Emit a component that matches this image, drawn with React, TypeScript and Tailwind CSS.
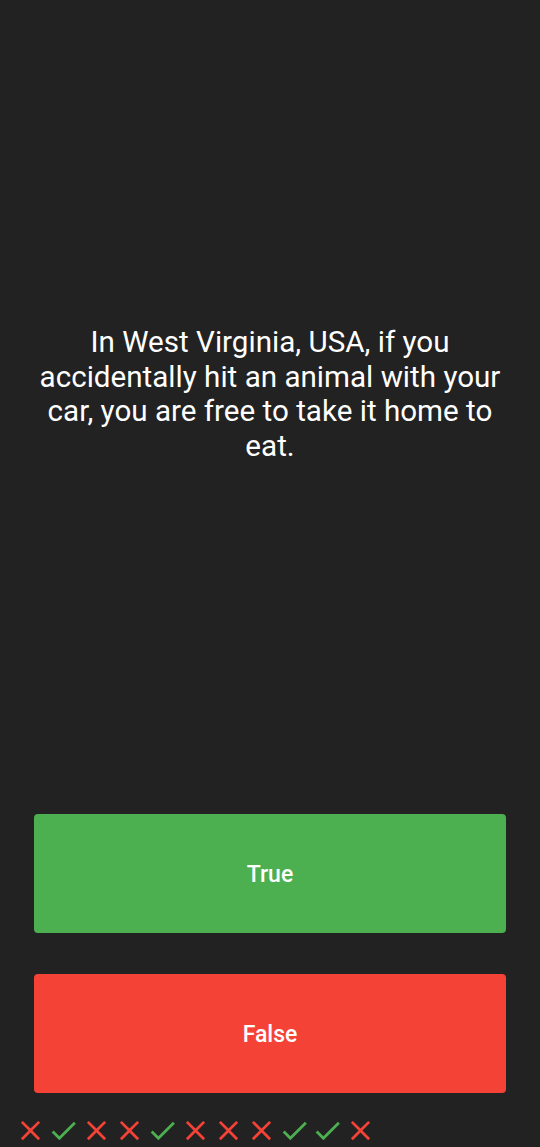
import React from "react";

const XIcon = () => (
  <svg width="33" height="33" viewBox="0 0 24 24" fill="#F44336">
    <path d="M19 6.41 17.59 5 12 10.59 6.41 5 5 6.41 10.59 12 5 17.59 6.41 19 12 13.41 17.59 19 19 17.59 13.41 12z" />
  </svg>
);

const CheckIcon = () => (
  <svg width="33" height="33" viewBox="0 0 24 24" fill="#4CAF50">
    <path d="M9 16.17 4.83 12l-1.42 1.41L9 19 21 7l-1.41-1.41z" />
  </svg>
);

export default function App() {
  const results = [false, true, false, false, true, false, false, false, true, true, false];
  return (
    <div
      className="w-[540px] h-[1147px] bg-[#222222] flex flex-col overflow-hidden"
      style={{ fontFamily: "Roboto, 'Noto Sans', sans-serif" }}
    >
      <div className="pt-[325px] px-[34px]">
        <p className="text-white text-[29.6px] leading-[34.5px] text-center">
          In West Virginia, USA, if you accidentally hit an animal with your car, you are free to take it home to eat.
        </p>
      </div>
      <div className="flex-1" />
      <div className="flex flex-col gap-[41px] px-[34px]">
        <button className="h-[119px] w-full rounded-[4px] bg-[#4CAF50] text-white text-[23px] font-medium pt-[3px]">
          True
        </button>
        <button className="h-[119px] w-full rounded-[4px] bg-[#F44336] text-white text-[23px] font-medium pt-[3px]">
          False
        </button>
      </div>
      <div className="mt-[21px] h-[33px] flex pl-[14px]">
        {results.map((r, i) => (
          <div key={i} className="w-[33px] h-[33px]">
            {r ? <CheckIcon /> : <XIcon />}
          </div>
        ))}
      </div>
    </div>
  );
}
